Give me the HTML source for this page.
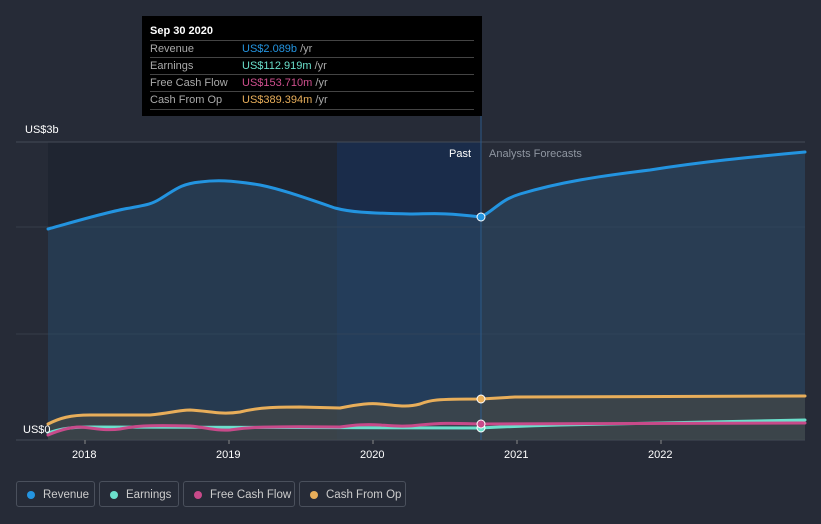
<!DOCTYPE html><html><head><style>
body{margin:0;background:#262b37;width:821px;height:524px;overflow:hidden;font-family:"Liberation Sans",sans-serif;position:relative}
.tt{position:absolute;left:142px;top:16px;width:340px;height:100px;background:#000;color:#fff;font-size:11px}
.tt .h{position:absolute;left:8px;top:9px;font-weight:bold}
.row{position:absolute;left:8px;width:324px;height:17px;border-top:1px solid #444;line-height:17px;color:#aaa}
.row b{font-weight:normal;position:absolute;left:92px}
.lg{position:absolute;top:481px;height:26px;border:1px solid #4a505c;border-radius:3px;color:#ccc;font-size:11.5px;line-height:26px;box-sizing:border-box;padding-left:26px;white-space:nowrap;overflow:hidden}
.lg i{position:absolute;left:10px;top:9px;width:8px;height:8px;border-radius:50%}
</style></head><body>
<svg width="821" height="524" style="position:absolute;left:0;top:0">
<rect x="48" y="142" width="433" height="298" fill="#1f2531"/>
<rect x="337" y="142" width="144" height="298" fill="#1a2c4a"/>
<line x1="16" y1="142" x2="805" y2="142" stroke="#444b57"/>
<line x1="16" y1="227" x2="805" y2="227" stroke="#363c48"/>
<line x1="16" y1="334" x2="805" y2="334" stroke="#363c48"/>
<line x1="16" y1="440" x2="805" y2="440" stroke="#444b57"/>
<path d="M48,229 C70,223 110,211 130,208 C145,205 150,205 160,199 C175,190 180,184 200,182 C215,180 230,180 260,185 C280,189 300,196 335,208 C350,212 365,213 410,214 C430,214 440,212 481,217 C495,210 500,200 520,194 C560,182 600,176 650,170 C700,162 750,157 805,152 L805,440 L48,440Z" fill="#2c4a66" opacity="0.6"/>
<path d="M48,424 C60,418 70,415 90,415 L150,415 C170,413 180,410 190,410 C210,411 220,415 240,412 C260,407 280,407 300,407 L340,408 C360,404 370,403 380,404 C395,405 405,408 420,404 C430,400 435,399 481,399 L515,397 L805,396 L805,440 L48,440Z" fill="#4a4a44" opacity="0.55"/>
<g fill="none" stroke-width="3" stroke-linecap="round">
<path d="M48,229 C70,223 110,211 130,208 C145,205 150,205 160,199 C175,190 180,184 200,182 C215,180 230,180 260,185 C280,189 300,196 335,208 C350,212 365,213 410,214 C430,214 440,212 481,217 C495,210 500,200 520,194 C560,182 600,176 650,170 C700,162 750,157 805,152" stroke="#2394e0"/>
<path d="M48,424 C60,418 70,415 90,415 L150,415 C170,413 180,410 190,410 C210,411 220,415 240,412 C260,407 280,407 300,407 L340,408 C360,404 370,403 380,404 C395,405 405,408 420,404 C430,400 435,399 481,399 L515,397 L805,396" stroke="#e8ae5a"/>
<path d="M48,433 C60,429 70,427 90,427 L480,428 C500,427 520,426 560,425 L805,420" stroke="#6be0cc"/>
<path d="M48,435 C60,430 70,427 80,427 C95,428 105,431 120,429 C135,426 145,425 190,426 C205,427 215,431 230,430 C245,428 250,426 340,427 C355,425 365,424 380,425 C395,426 405,427 420,425 C440,423 450,423 481,424 L805,423" stroke="#c84a8a"/>
</g>
<line x1="481" y1="116" x2="481" y2="440" stroke="#2c5a8a"/>
<circle cx="481" cy="217" r="4" fill="#2394e0" stroke="#fff"/>
<circle cx="481" cy="399" r="4" fill="#e8ae5a" stroke="#fff"/>
<circle cx="481" cy="428" r="4" fill="#6be0cc" stroke="#fff"/>
<circle cx="481" cy="424" r="4" fill="#c84a8a" stroke="#fff"/>
<g font-size="11" fill="#fff" font-family="Liberation Sans">
<text x="25" y="133">US$3b</text><text x="23" y="433">US$0</text>
<text x="449" y="157">Past</text><text x="489" y="157" fill="#8f96a1">Analysts Forecasts</text>
<text x="72" y="458">2018</text><text x="216" y="458">2019</text><text x="360" y="458">2020</text><text x="504" y="458">2021</text><text x="648" y="458">2022</text>
</g>
<g stroke="#888" stroke-width="1"><line x1="85" y1="440" x2="85" y2="444"/><line x1="229" y1="440" x2="229" y2="444"/><line x1="373" y1="440" x2="373" y2="444"/><line x1="517" y1="440" x2="517" y2="444"/><line x1="661" y1="440" x2="661" y2="444"/></g>
</svg>
<div class="tt"><div class="h">Sep 30 2020</div>
<div class="row" style="top:24px">Revenue<b><span style="color:#2394e0">US$2.089b</span> /yr</b></div>
<div class="row" style="top:41px">Earnings<b><span style="color:#6be0cc">US$112.919m</span> /yr</b></div>
<div class="row" style="top:58px">Free Cash Flow<b><span style="color:#d0508f">US$153.710m</span> /yr</b></div>
<div class="row" style="top:75px;border-bottom:1px solid #444">Cash From Op<b><span style="color:#e8ae5a">US$389.394m</span> /yr</b></div>
</div>
<div class="lg" style="left:16px;width:79px"><i style="background:#2394e0"></i>Revenue</div>
<div class="lg" style="left:99px;width:80px"><i style="background:#6be0cc"></i>Earnings</div>
<div class="lg" style="left:183px;width:112px"><i style="background:#c84a8a"></i>Free Cash Flow</div>
<div class="lg" style="left:299px;width:107px"><i style="background:#e8ae5a"></i>Cash From Op</div>
</body></html>
